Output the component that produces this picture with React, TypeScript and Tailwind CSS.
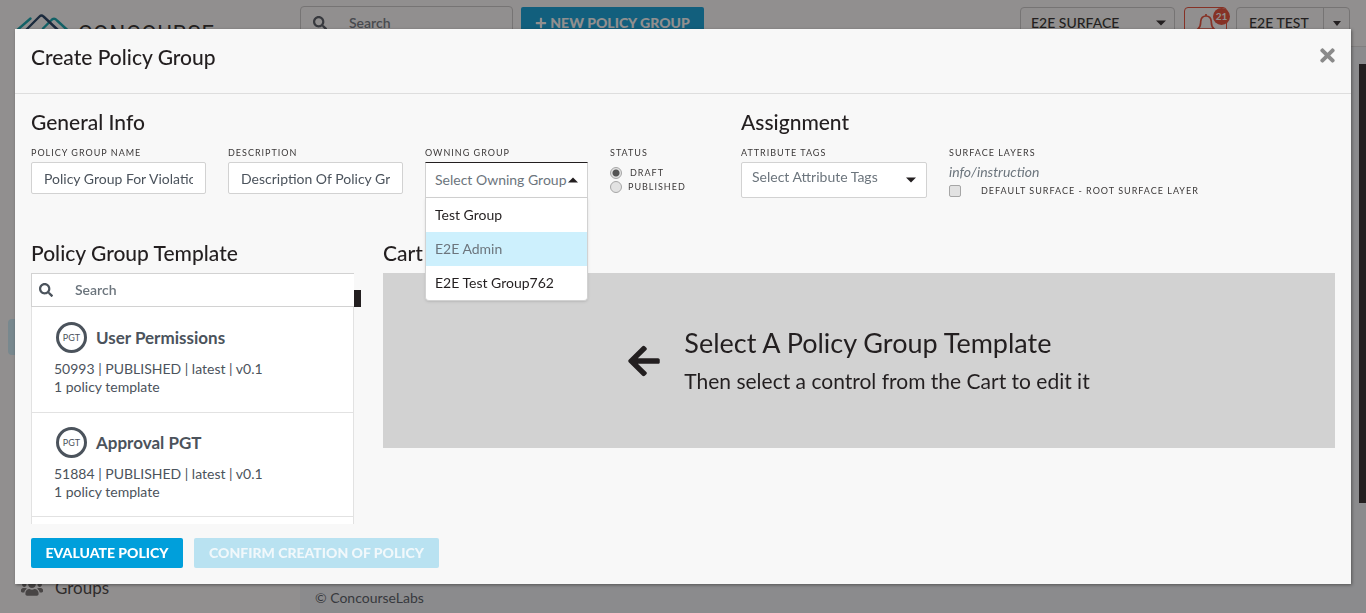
import React from "react";
import { FaArrowLeft, FaPlus, FaSearch, FaTimes, FaUsers } from "react-icons/fa";

const templates = [
  { name: "User Permissions", id: "50993" },
  { name: "Approval PGT", id: "51884" },
];

const owningGroups = ["Test Group", "E2E Admin", "E2E Test Group762"];

const label = "block text-[9px] leading-[18px] tracking-[1px] uppercase text-[#3b3838] whitespace-nowrap";
const heading = "text-[21px] leading-6 font-medium text-[#231f20] whitespace-nowrap";
const textBox =
  "block h-8 w-[175px] rounded-xs border border-[#d2d2d2] bg-white px-3 text-sm text-[#4b535c] outline-none";

function Caret({ up = false }: { up?: boolean }) {
  return (
    <svg viewBox="0 0 10 6" className="h-[6px] w-[10px] shrink-0 fill-[#231f20]" aria-hidden="true">
      <path d={up ? "M0 5.5 5 0.5 10 5.5Z" : "M0 0.5 5 5.5 10 0.5Z"} />
    </svg>
  );
}

function Logo() {
  return (
    <a href="#home" className="flex items-start gap-2 pl-4 pt-[13px] text-[#231f20]">
      <svg viewBox="0 0 54 30" className="h-[30px] w-[54px]" fill="none" strokeWidth="2.4" strokeLinecap="round" strokeLinejoin="round">
        <path d="M0 18 L14.500 5.500" stroke="#00a3ad" />
        <path d="M27 15.500 L35 7.500 Q38 4 41 7.500 L53 18.500" stroke="#00a3ad" />
        <path d="M9 18 L23.500 3.500 Q25.500 1.500 27.500 3.500 L43 18" stroke="#12355b" />
      </svg>
      <span className="pt-[9px] font-['Roboto'] text-[22px] leading-6 tracking-[1px] text-[#231f20]">CONCOURSE</span>
    </a>
  );
}

function Page() {
  return (
    <div className="flex h-screen overflow-hidden bg-white text-[#231f20]">
      <aside className="flex w-[300px] shrink-0 flex-col">
        <Logo />
        <nav className="flex grow flex-col justify-between">
          <a href="#policies" className="ml-2 mt-[273px] block h-9 rounded bg-[#cdf0fd]" aria-label="Policies" />
          <a href="#groups" className="flex items-center gap-3 pb-[13px] pl-[21px] text-[17px] leading-6 text-[#3b3838]">
            <FaUsers className="h-5 w-[22px] text-[#6c6a6b]" />
            Groups
          </a>
        </nav>
      </aside>
      <div className="flex grow flex-col bg-[#f3f7fa]">
        <header className="flex h-[47px] items-start border-b border-[#dedede] bg-white pr-4 pt-[6px]">
          <label className="flex h-[34px] w-[213px] items-center gap-[22px] rounded-sm border border-[#c8c8c8] px-3 text-[#4b535c]">
            <FaSearch className="h-[14px] w-[14px] shrink-0" />
            <input
              aria-label="Search policy groups"
              placeholder="Search"
              className="w-full min-w-0 bg-transparent text-sm font-semibold outline-none placeholder:text-[#6c757d]"
            />
          </label>
          <button className="ml-2 mt-px flex h-8 w-[183px] items-center justify-center gap-[3px] rounded-xs bg-[#009fdb] text-sm font-black whitespace-nowrap text-white">
            <FaPlus className="h-3 w-3" />
            NEW POLICY GROUP
          </button>
          <div className="ml-auto mt-px flex gap-[9px] text-sm font-medium">
            <button className="flex h-8 w-[155px] items-center justify-between rounded-sm border border-[#c8c8c8] pr-2 pl-[10px]">
              E2E SURFACE
              <Caret />
            </button>
            <button
              aria-label="Notifications"
              className="relative flex h-8 w-[43px] items-center justify-center rounded-sm border border-[#e8452c]"
            >
              <svg viewBox="0 0 20 20" className="h-5 w-5" fill="none" stroke="#e8452c" strokeWidth="1.7">
                <path d="M2 16 C5 13.500 4.500 11 4.700 8.500 C5 5 7 3 10 3 C13 3 15 5 15.300 8.500 C15.500 11 15 13.500 18 16 Z M10 3 V1 M8 18 H12" />
              </svg>
              <span className="absolute -right-1 top-0 flex h-[17px] w-[17px] items-center justify-center rounded-full bg-[#e8452c] text-[10px] font-bold text-white">
                21
              </span>
            </button>
            <div className="flex h-8 rounded-sm border border-[#c8c8c8]">
              <button className="w-[86px] px-3 text-left whitespace-nowrap">E2E TEST</button>
              <button aria-label="Account menu" className="flex w-[26px] items-center justify-center border-l border-[#c8c8c8]">
                <svg viewBox="0 0 8 5" className="h-[5px] w-2 fill-[#231f20]">
                  <path d="M0 0H8L4 5Z" />
                </svg>
              </button>
            </div>
          </div>
        </header>
        <main className="flex grow justify-end pt-[17px]">
          <div className="h-[439px] w-[7px] bg-[#231f20]" />
        </main>
        <footer className="px-[15px] pb-[5px] text-sm leading-5 text-[#4b535c]">© ConcourseLabs</footer>
      </div>
    </div>
  );
}

function OwningGroup() {
  return (
    <div className="w-[163px]">
      <span id="owning" className={label}>Owning Group</span>
      <div className="relative">
        <button
          aria-labelledby="owning"
          aria-expanded="true"
          className="flex h-9 w-full items-center justify-between border border-t-[#231f20] border-[#d2d2d2] bg-white px-[9px] text-sm whitespace-nowrap text-[#6c757d]"
        >
          Select Owning Group
          <Caret up />
        </button>
        <ul
          role="listbox"
          aria-labelledby="owning"
          className="absolute inset-x-0 top-9 z-10 overflow-hidden rounded-b border border-t-0 border-[#d2d2d2] bg-white text-sm shadow-sm"
        >
          {owningGroups.map((group, i) => (
            <li
              key={group}
              role="option"
              aria-selected={i === 1}
              className={
                i === 1 ? "h-[34px] bg-[#cdf0fd] px-[9px] leading-[34px] text-[#6c757d]" : "h-[34px] px-[9px] leading-[34px] text-[#231f20]"
              }
            >
              {group}
            </li>
          ))}
        </ul>
      </div>
    </div>
  );
}

const radio =
  "h-3 w-3 appearance-none rounded-full border border-[#a6a6a6] bg-[#e2e2e2] checked:bg-[radial-gradient(circle,#555_0_3px,#e2e2e2_4px)]";

function Fields() {
  return (
    <div className="flex">
      <section className="w-[710px] shrink-0">
        <h2 className={heading}>General Info</h2>
        <div className="mt-[10px] flex gap-[22px]">
          <div>
            <label htmlFor="name" className={label}>Policy Group Name</label>
            <input id="name" defaultValue="Policy Group For Violations" className={textBox} />
          </div>
          <div>
            <label htmlFor="description" className={label}>Description</label>
            <input id="description" defaultValue="Description Of Policy Group" className={textBox} />
          </div>
          <OwningGroup />
          <fieldset>
            <legend className={label}>Status</legend>
            <div className="mt-1 flex h-[14px] items-center gap-2">
              <input id="draft" type="radio" name="status" defaultChecked className={radio} />
              <label htmlFor="draft" className={label}>Draft</label>
            </div>
            <div className="flex h-[14px] items-center gap-[6px]">
              <input id="published" type="radio" name="status" className={radio} />
              <label htmlFor="published" className={label}>Published</label>
            </div>
          </fieldset>
        </div>
      </section>
      <section>
        <h2 className={heading}>Assignment</h2>
        <div className="mt-[10px] flex gap-[22px]">
          <div>
            <span id="tags" className={label}>Attribute Tags</span>
            <button
              aria-labelledby="tags"
              className="flex h-9 w-[186px] items-center justify-between rounded-xs border border-[#d2d2d2] bg-white px-[10px] text-sm text-[#6c757d]"
            >
              <span className="pb-[6px]">Select Attribute Tags</span>
              <Caret />
            </button>
          </div>
          <div>
            <span className={label}>Surface Layers</span>
            <p className="text-sm leading-5 italic text-[#6c757d]">info/instruction</p>
            <div className="flex items-center gap-5">
              <input
                id="layer"
                type="checkbox"
                className="h-3 w-3 appearance-none rounded-xs border border-[#a6a6a6] bg-[#e2e2e2]"
              />
              <label htmlFor="layer" className={label}>Default Surface - Root Surface Layer</label>
            </div>
          </div>
        </div>
      </section>
    </div>
  );
}

function TemplateList() {
  return (
    <section className="w-[330px] shrink-0">
      <h2 className={heading}>Policy Group Template</h2>
      <div className="mt-2 flex h-[251px] overflow-hidden">
        <div className="flex w-[323px] flex-col">
          <label className="flex h-[34px] shrink-0 items-center gap-[22px] border border-r-0 border-[#d2d2d2] bg-white px-[7px] text-[#4b535c]">
            <FaSearch className="h-[14px] w-[14px] shrink-0" />
            <input
              aria-label="Search templates"
              placeholder="Search"
              className="w-full min-w-0 bg-transparent text-sm font-semibold outline-none placeholder:text-[#6c757d]"
            />
          </label>
          <ul className="grow border-x border-[#e2e2e2] bg-white text-[#4b535c]">
            {templates.map((t) => (
              <li key={t.id} className="h-[104px] border-b border-[#e2e2e2] px-[22px] pt-[14px] first:h-[106px] first:pt-[15px]">
                <div className="flex items-center gap-[9px] pl-[2px]">
                  <span className="flex h-[31px] w-[31px] items-center justify-center rounded-full border-3 border-[#4b535c] text-[9px]">
                    PGT
                  </span>
                  <h3 className="text-[17px] leading-[31px] font-bold">{t.name}</h3>
                </div>
                <p className="mt-[7px] text-sm leading-[18px]">{t.id} | PUBLISHED | latest | v0.1</p>
                <p className="text-sm leading-[18px]">1 policy template</p>
              </li>
            ))}
          </ul>
        </div>
        <div className="mt-[17px] h-[17px] w-[7px] bg-[#231f20]" />
      </div>
    </section>
  );
}

export default function App() {
  return (
    <div className="font-['Lato',sans-serif]">
      <Page />
      <div className="fixed inset-0 bg-[#231f20]/50 px-[15px] pt-[29px]">
        <div role="dialog" aria-modal="true" aria-labelledby="title" className="bg-[#f8f8f8] shadow-[1px_1px_3px_rgba(0,0,0,0.4)]">
          <header className="flex h-[65px] items-start justify-between border-b border-[#dedede] px-4 pt-4">
            <h1 id="title" className={heading}>Create Policy Group</h1>
            <button aria-label="Close" className="text-[#8a8a8a]">
              <FaTimes className="h-[21px] w-[15px]" />
            </button>
          </header>
          <div className="px-4 pt-4 pb-4">
            <Fields />
            <div className="mt-[41px] flex gap-[22px]">
              <TemplateList />
              <section className="grow">
                <h2 className={heading}>Cart</h2>
                <div className="mt-2 flex h-[175px] items-center justify-center gap-6 bg-[#d2d2d2] text-[#231f20]">
                  <FaArrowLeft className="h-9 w-8" />
                  <div>
                    <p className="text-[27px] leading-10">Select A Policy Group Template</p>
                    <p className="text-[21px] leading-9">Then select a control from the Cart to edit it</p>
                  </div>
                </div>
              </section>
            </div>
            <div className="mt-[14px] flex gap-[11px] text-sm font-black">
              <button className="h-[30px] w-[152px] rounded-xs bg-[#009fdb] text-white">EVALUATE POLICY</button>
              <button disabled className="h-[30px] w-[245px] rounded-xs bg-[#b9e2f1] text-[#f1f8fb]">
                CONFIRM CREATION OF POLICY
              </button>
            </div>
          </div>
        </div>
      </div>
    </div>
  );
}
